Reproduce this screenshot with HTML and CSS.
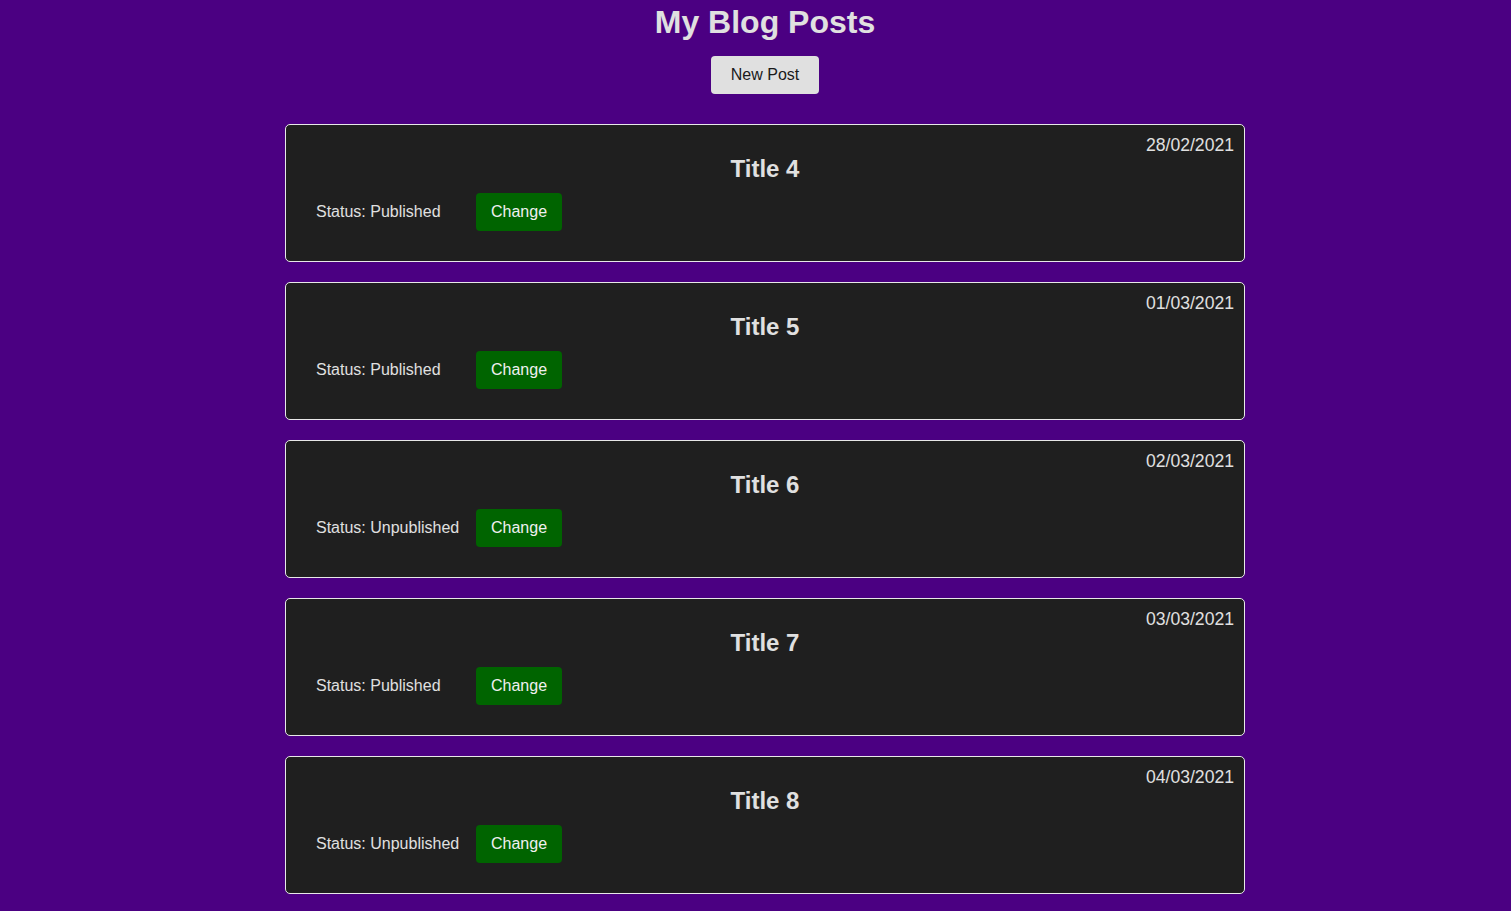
FILE: index.html
```html
<!DOCTYPE html>
<html lang="en">
<head>
<meta charset="utf-8">
<title>My Blog Posts</title>
<link rel="stylesheet" href="styles.css">
</head>
<body>
<main class="page">
  <header class="header">
    <h1 class="page-title">My Blog Posts</h1>
    <button class="btn-new">New Post</button>
  </header>
  <section class="posts">
    <article class="post">
      <span class="post-date">28/02/2021</span>
      <h2 class="post-title">Title 4</h2>
      <div class="post-row"><span class="post-status">Status: Published</span><button class="btn-change">Change</button></div>
    </article>
    <article class="post">
      <span class="post-date">01/03/2021</span>
      <h2 class="post-title">Title 5</h2>
      <div class="post-row"><span class="post-status">Status: Published</span><button class="btn-change">Change</button></div>
    </article>
    <article class="post">
      <span class="post-date">02/03/2021</span>
      <h2 class="post-title">Title 6</h2>
      <div class="post-row"><span class="post-status">Status: Unpublished</span><button class="btn-change">Change</button></div>
    </article>
    <article class="post">
      <span class="post-date">03/03/2021</span>
      <h2 class="post-title">Title 7</h2>
      <div class="post-row"><span class="post-status">Status: Published</span><button class="btn-change">Change</button></div>
    </article>
    <article class="post">
      <span class="post-date">04/03/2021</span>
      <h2 class="post-title">Title 8</h2>
      <div class="post-row"><span class="post-status">Status: Unpublished</span><button class="btn-change">Change</button></div>
    </article>
  </section>
</main>
</body>
</html>
```
FILE: styles.css
```css
html, body {
  margin: 0;
  padding: 0;
  background: #4b0082;
}
body {
  font-family: "Liberation Sans", Arial, sans-serif;
  color: #e0e0e0;
  padding-left: 19px;
}
.page {
  display: flex;
  flex-direction: column;
  align-items: center;
  padding-top: 4px;
}
.header {
  display: flex;
  flex-direction: column;
  align-items: center;
}
.page-title {
  margin: 0;
  font-size: 32px;
  line-height: 37px;
  font-weight: bold;
  color: #e0e0e0;
}
.btn-new {
  margin-top: 15px;
  font-family: inherit;
  font-size: 16px;
  line-height: 18px;
  padding: 10px 20px;
  border: none;
  border-radius: 4px;
  background: #e0e0e0;
  color: #1a1a1a;
}
.posts {
  margin-top: 30px;
  display: flex;
  flex-direction: column;
  gap: 20px;
  width: 960px;
}
.post {
  position: relative;
  box-sizing: border-box;
  background: #1f1f1f;
  border: 1px solid #e8e8e8;
  border-radius: 5px;
  padding: 30px 30px 30px;
  display: flex;
  flex-direction: column;
}
.post-date {
  position: absolute;
  top: 10px;
  right: 10px;
  font-size: 17.6px;
  line-height: 20px;
}
.post-title {
  margin: 0 0 10px;
  text-align: center;
  font-size: 24px;
  line-height: 28px;
  font-weight: bold;
}
.post-row {
  display: flex;
  align-items: center;
}
.post-status {
  width: 160px;
  font-size: 16px;
  line-height: 18px;
}
.btn-change {
  font-family: inherit;
  font-size: 16px;
  line-height: 18px;
  padding: 10px 15px;
  border: none;
  border-radius: 4px;
  background: #006400;
  color: #f0f0f0;
}
```
